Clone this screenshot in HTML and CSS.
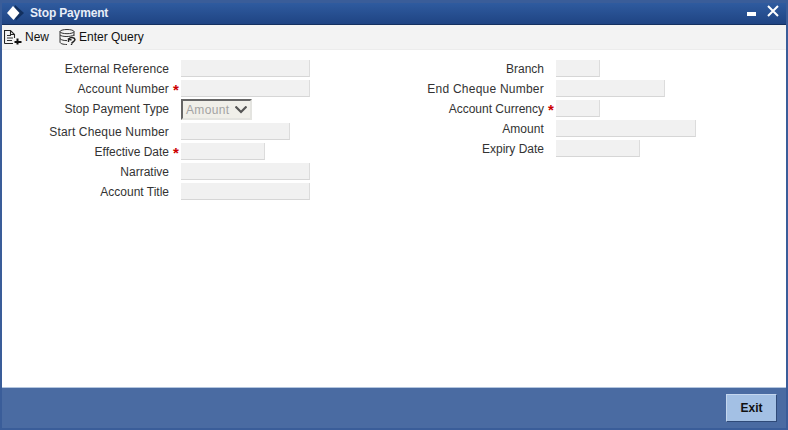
FILE: index.html
```html
<!DOCTYPE html>
<html lang="en">
<head>
<meta charset="utf-8">
<title>Stop Payment</title>
<link rel="stylesheet" href="styles.css">
</head>
<body>
<div class="window">
  <header class="titlebar">
    <svg class="logo" width="18" height="16" viewBox="0 0 18 16">
      <path d="M8 0L17 8L9 15.5L6 8Z" fill="#12305f"/>
      <path d="M6 1L12.5 8L6.5 15L0 8Z" fill="#fff"/>
    </svg>
    <span class="title">Stop Payment</span>
    <span class="controls">
      <svg class="min" width="9" height="4" viewBox="0 0 9 4"><rect width="9" height="4" fill="#fff"/></svg>
      <svg width="12" height="12" viewBox="0 0 12 12"><path d="M1 1L11 11M11 1L1 11" stroke="#fff" stroke-width="2" fill="none"/></svg>
    </span>
  </header>
  <nav class="toolbar">
    <span class="tool tool-new">
      <svg width="18" height="16" viewBox="0 0 18 16">
        <path d="M0.5 14.5V1.5H6.5L10.5 5.5V9M6.5 1.5V5.5H10.5M0.5 14.5H9" fill="none" stroke="#222" stroke-width="1.1"/>
        <path d="M3 6.5H7M3 9H9M3 11.5H8" stroke="#333"/>
        <path d="M13.5 9.5V15.5M10.5 13H17.5" stroke="#111" stroke-width="2"/>
      </svg>
      New
    </span>
    <span class="tool">
      <svg width="17" height="16" viewBox="0 0 17 16">
        <ellipse cx="8" cy="2.6" rx="7" ry="2.1" fill="none" stroke="#333"/>
        <path d="M1 2.6V13C1 14.6 4 15.5 8 15.5M15 2.6V7M1 6C2.5 7.8 11 8.2 15 6M1 9.6C2.5 11.2 5 11.6 8 11.6" fill="none" stroke="#333"/>
        <path d="M10 10C11 8 15.5 8 16 10.5C16 12 14 12.5 12.5 14.5M12.5 11L9.5 10V13M12.5 15V16" fill="none" stroke="#222" stroke-width="1.4"/>
      </svg>
      Enter Query
    </span>
  </nav>
  <main class="form">
    <section class="col col-left">
      <div class="row"><label class="lbl ls-s">External Reference</label><span class="mark"></span><input class="fld w129" disabled></div>
      <div class="row"><label class="lbl ls-m">Account Number</label><span class="mark">*</span><input class="fld w129" disabled></div>
      <div class="row row-select"><label class="lbl">Stop Payment Type</label><span class="mark"></span>
        <span class="select">Amount
          <svg width="12" height="8" viewBox="0 0 12 8"><path d="M0.5 0.5L6 6L11.5 0.5" fill="none" stroke="#555" stroke-width="2.2"/></svg>
        </span>
      </div>
      <div class="row"><label class="lbl ls-m">Start Cheque Number</label><span class="mark"></span><input class="fld w109" disabled></div>
      <div class="row"><label class="lbl">Effective Date</label><span class="mark">*</span><input class="fld w84" disabled></div>
      <div class="row"><label class="lbl">Narrative</label><span class="mark"></span><input class="fld w129" disabled></div>
      <div class="row"><label class="lbl">Account Title</label><span class="mark"></span><input class="fld w129" disabled></div>
    </section>
    <section class="col col-right">
      <div class="row"><label class="lbl">Branch</label><span class="mark"></span><input class="fld w44" disabled></div>
      <div class="row"><label class="lbl ls-l">End Cheque Number</label><span class="mark"></span><input class="fld w109" disabled></div>
      <div class="row"><label class="lbl">Account Currency</label><span class="mark">*</span><input class="fld w44" disabled></div>
      <div class="row"><label class="lbl ls-s">Amount</label><span class="mark"></span><input class="fld w140" disabled></div>
      <div class="row"><label class="lbl">Expiry Date</label><span class="mark"></span><input class="fld w84" disabled></div>
    </section>
  </main>
  <footer class="footer"><button class="exit">Exit</button></footer>
</div>
</body>
</html>
```
FILE: styles.css
```css
* { box-sizing: border-box; }
html, body { margin: 0; padding: 0; }
body { width: 788px; height: 430px; overflow: hidden; background: #3b5f9a; font-family: "Liberation Sans", Arial, sans-serif; font-size: 12px; color: #333; }
.window { width: 788px; height: 430px; padding: 3px 2px 2px; display: flex; flex-direction: column; background: #3a5d99; }
.titlebar { height: 22px; flex: none; display: flex; align-items: flex-start; padding: 2px 0 0 5px; background: linear-gradient(#2f5b9f, #1f4483); border-bottom: 1px solid #14305f; }
.logo { margin-right: 5px; }
.title { color: #e8eef8; font-weight: bold; font-size: 12px; letter-spacing: -0.15px; line-height: 17px; }
.controls { margin-left: auto; display: flex; align-items: flex-start; gap: 11px; padding-right: 7px; }
.min { margin-top: 7px; }
.toolbar { height: 25px; flex: none; display: flex; align-items: center; gap: 10px; padding: 0 0 1px 2px; background: #f3f3f3; border-bottom: 1px solid #ececec; color: #111; }
.tool { display: flex; align-items: center; gap: 3px; }
.form { flex: 1; background: #fff; display: flex; padding-top: 10px; }
.col { display: flex; flex-direction: column; }
.col-left { width: 375px; }
.lbl { display: block; text-align: right; }
.ls-s { letter-spacing: 0.08px; }
.ls-m { letter-spacing: 0.16px; }
.ls-l { letter-spacing: 0.23px; }
.col-left .lbl { width: 167px; }
.col-right .lbl { width: 167px; }
.row { height: 20px; display: flex; align-items: flex-start; }
.row .lbl { line-height: 19px; }
.row-select { height: 24px; margin-top: -1px; }
.row-select .lbl { line-height: 21px; }
.mark { width: 12px; color: #c00; font-weight: bold; font-size: 15px; line-height: 19px; padding-left: 4px; }
.fld { height: 17px; padding: 0; margin: 0; background: #f1f1f1; border: 0; border-right: 1px solid #dcdcdc; border-bottom: 1px solid #d6d6d6; display: block; }
.w44 { width: 44px; }
.w84 { width: 84px; }
.w109 { width: 109px; }
.w129 { width: 129px; }
.w140 { width: 140px; }
.select { width: 71px; height: 21px; display: flex; align-items: center; justify-content: space-between; padding: 0 3px 0 3px; background: #f0efe9; border: 2px solid; border-color: #666 #e4e4e0 #e4e4e0 #666; color: #a3a3a3; font-size: 12px; letter-spacing: 0.35px; }
.footer { height: 41px; flex: none; background: #4a6ba2; border-top: 1px solid #b4c6df; display: flex; justify-content: flex-end; align-items: flex-start; padding: 6px 9px 0 0; }
.exit { width: 51px; height: 28px; background: #a3c0e4; border: 1px solid; border-color: #c4d6ee #2f4a78 #2f4a78 #c4d6ee; color: #111; font: bold 12px "Liberation Sans", Arial, sans-serif; padding: 0; }
```
